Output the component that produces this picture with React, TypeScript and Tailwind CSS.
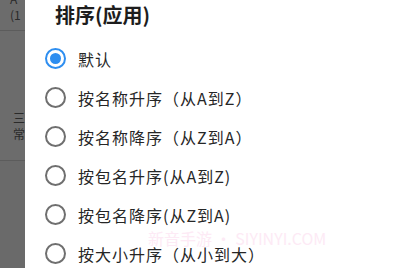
import React from 'react';

const options = [
  '默认',
  '按名称升序（从A到Z）',
  '按名称降序（从Z到A）',
  '按包名升序(从A到Z)',
  '按包名降序(从Z到A)',
  '按大小升序（从小到大）',
];

const Radio: React.FC<{ checked: boolean }> = ({ checked }) => (
  <span
    className={`w-[21px] h-[21px] rounded-full border-2 flex items-center justify-center shrink-0 ${
      checked ? 'border-[#2e8ef0]' : 'border-[#6f6f6f]'
    }`}
  >
    {checked && <span className="w-[11px] h-[11px] rounded-full bg-[#2e8ef0]"></span>}
  </span>
);

export default function App() {
  return (
    <div
      className="w-[420px] h-[268px] flex overflow-hidden bg-white"
      style={{ fontFamily: '"Noto Sans CJK SC", "Noto Sans", sans-serif' }}
    >
      {/* dimmed page behind the dialog */}
      <div className="w-[25px] shrink-0 bg-[#6c6c6c] flex flex-col text-[#2a2a2a] text-[12px] leading-[16px] overflow-hidden">
        <div className="h-[40px] border-b border-[#5c5c5c] pl-[10px] -mt-[9px]">
          <div>A</div>
          <div>(1</div>
        </div>
        <div className="h-[130px] border-b border-[#5c5c5c] pl-[13px] pt-[79px]">
          <div>三</div>
          <div>常</div>
        </div>
        <div className="flex-1 bg-[#6a6a6a]"></div>
      </div>

      {/* dialog */}
      <div className="flex-1 relative">
        <h2 className="pl-[30px] pt-[2px] text-[20px] leading-[26px] font-bold text-[#1d1d1d]">
          排序(应用)
        </h2>
        <ul className="mt-[11px] pl-[20px]">
          {options.map((label, i) => (
            <li key={label} className="h-[39px] flex items-center gap-[12px]">
              <Radio checked={i === 0} />
              <span className="text-[16px] tracking-[1px] text-[#262626]">{label}</span>
            </li>
          ))}
        </ul>
        <div className="absolute left-[123px] top-[226px] text-[16px] text-[#fdeaf5] pointer-events-none whitespace-nowrap">
          新音手游 • SIYINYI.COM
        </div>
      </div>
    </div>
  );
}
